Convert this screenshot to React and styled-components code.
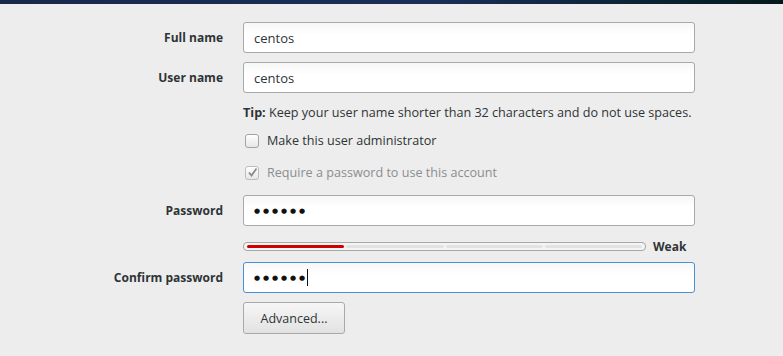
import React from "react";
import styled, { createGlobalStyle } from "styled-components";

const GlobalStyle = createGlobalStyle`
  html, body {
    margin: 0;
    padding: 0;
    background: #ededed;
  }
  body {
    font-family: "Open Sans", "DejaVu Sans", sans-serif;
    font-size: 13px;
    color: #2e3436;
  }
`;

const Page = styled.div`
  width: 783px;
  height: 356px;
  background: #ededed;
  overflow: hidden;
`;

const TopBar = styled.div`
  height: 4px;
  background: linear-gradient(90deg, #17284a 0%, #1a2e57 55%, #0d2438 80%, #021a1a 100%);
`;

const Form = styled.div`
  display: flex;
  flex-direction: column;
`;

const Row = styled.div`
  display: grid;
  grid-template-columns: 223px 452px;
  column-gap: 20px;
  align-items: center;
  margin-top: ${(p) => p.$top || 0}px;
  height: ${(p) => p.$h}px;
`;

const Label = styled.label`
  text-align: right;
  font-weight: 700;
  font-size: 12px;
  color: #2e3436;
`;

const Field = styled.div`
  height: 31px;
  box-sizing: border-box;
  border: 1px solid ${(p) => (p.$focus ? "#4a90d9" : "#a9a9a9")};
  border-radius: 3px;
  background: linear-gradient(#f7f7f7, #ffffff 40%);
  display: flex;
  align-items: center;
  padding: 0 10px;
  font-size: 13px;
  color: #2e3436;
`;

const Dots = styled.span`
  font-family: "DejaVu Sans", sans-serif;
  font-size: 7px;
  letter-spacing: 2.9px;
  color: #111;
`;

const Caret = styled.span`
  display: inline-block;
  width: 1px;
  height: 17px;
  background: #111;
  margin-left: -1px;
`;

const Tip = styled.div`
  grid-column: 2;
  font-size: 12.6px;
  color: #2e3436;
  white-space: nowrap;
  b {
    font-weight: 700;
  }
`;

const CheckRow = styled.label`
  grid-column: 2;
  display: flex;
  align-items: center;
  gap: 8px;
  margin-left: 2px;
  font-size: 12.6px;
  color: ${(p) => (p.$disabled ? "#8b8e8f" : "#2e3436")};
`;

const Box = styled.span`
  width: 14px;
  height: 14px;
  box-sizing: border-box;
  border: 1px solid ${(p) => (p.$disabled ? "#bdbdbd" : "#a3a3a3")};
  border-radius: 3px;
  background: linear-gradient(#ffffff, #e6e6e6);
  display: flex;
  align-items: center;
  justify-content: center;
`;

const Strength = styled.div`
  display: flex;
  align-items: center;
  gap: 7px;
`;

const Meter = styled.div`
  width: 403px;
  height: 9px;
  box-sizing: border-box;
  border: 1px solid #a7a7a7;
  border-radius: 4px;
  background: #f4f4f4;
  display: flex;
  gap: 2px;
  padding: 2px 3px;
`;

const Segment = styled.div`
  flex: 1;
  height: 3px;
  border-radius: 2px;
  background: ${(p) => (p.$on ? "#cc0000" : "#e3e3e3")};
`;

const Weak = styled.span`
  font-weight: 700;
  font-size: 12px;
  color: #2e3436;
`;

const Button = styled.button`
  grid-column: 2;
  justify-self: start;
  width: 102px;
  height: 32px;
  border: 1px solid #a9a9a9;
  border-radius: 3px;
  background: linear-gradient(#f6f6f6, #e2e2e2);
  font-family: inherit;
  font-size: 12.5px;
  color: #2e3436;
  padding: 0;
`;

function Check({ checked, disabled }) {
  return (
    <Box $disabled={disabled}>
      {checked && (
        <svg width="11" height="11" viewBox="0 0 11 11">
          <path d="M2 5.5 L4.5 8.5 L9.5 1.5" fill="none" stroke="#8a8a8a" strokeWidth="1.8" />
        </svg>
      )}
    </Box>
  );
}

export default function App() {
  return (
    <Page>
      <GlobalStyle />
      <TopBar />
      <Form>
        <Row $top={18} $h={31}>
          <Label>Full name</Label>
          <Field>centos</Field>
        </Row>
        <Row $top={9} $h={31}>
          <Label>User name</Label>
          <Field>centos</Field>
        </Row>
        <Row $top={11} $h={16}>
          <Tip>
            <b>Tip:</b> Keep your user name shorter than 32 characters and do not use spaces.
          </Tip>
        </Row>
        <Row $top={12} $h={16}>
          <CheckRow>
            <Check />
            Make this user administrator
          </CheckRow>
        </Row>
        <Row $top={16} $h={16}>
          <CheckRow $disabled>
            <Check checked disabled />
            Require a password to use this account
          </CheckRow>
        </Row>
        <Row $top={15} $h={31}>
          <Label>Password</Label>
          <Field>
            <Dots>●●●●●●</Dots>
          </Field>
        </Row>
        <Row $top={12} $h={11}>
          <span />
          <Strength>
            <Meter>
              <Segment $on />
              <Segment />
              <Segment />
              <Segment />
            </Meter>
            <Weak>Weak</Weak>
          </Strength>
        </Row>
        <Row $top={13} $h={31}>
          <Label>Confirm password</Label>
          <Field $focus>
            <Dots>●●●●●●</Dots>
            <Caret />
          </Field>
        </Row>
        <Row $top={9} $h={32}>
          <Button>Advanced...</Button>
        </Row>
      </Form>
    </Page>
  );
}
